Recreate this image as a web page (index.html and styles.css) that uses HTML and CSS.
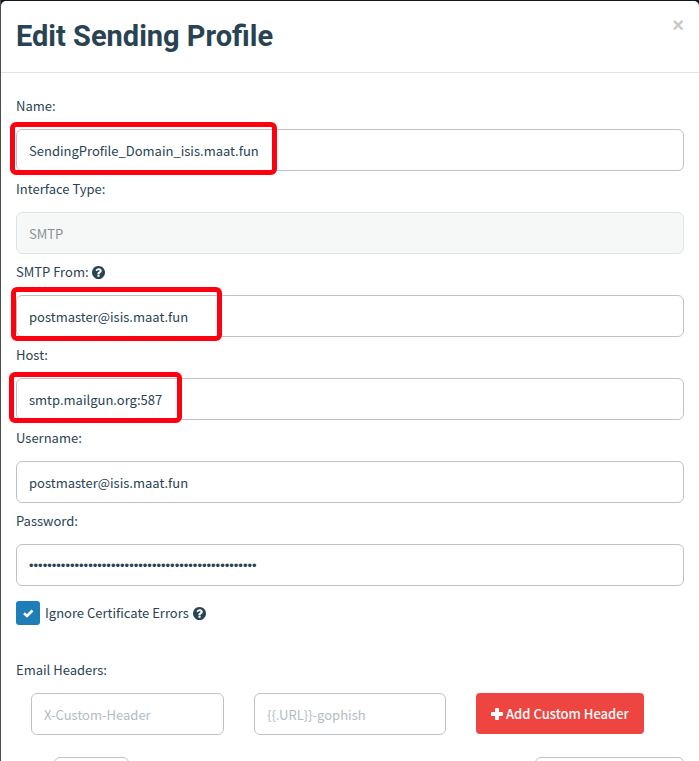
FILE: index.html
```html
<!DOCTYPE html>
<html lang="en">
<head>
<meta charset="utf-8">
<title>Edit Sending Profile</title>
<link rel="stylesheet" href="styles.css">
</head>
<body>
<svg width="0" height="0" class="sprite" aria-hidden="true">
  <symbol id="question" viewBox="0 0 1536 1536">
    <path d="M896 1248v-192q0-14-9-23t-23-9H672q-14 0-23 9t-9 23v192q0 14 9 23t23 9h192q14 0 23-9t9-23zm256-672q0-88-55.500-163T958 297t-170-41q-243 0-371 213-15 24 8 42l132 100q7 6 19 6 16 0 25-12 53-68 86-92 34-24 86-24 48 0 85.500 26t37.500 59q0 38-20 61t-68 45q-63 28-115.500 86.500T640 892v36q0 14 9 23t23 9h192q14 0 23-9t9-23q0-19 21.500-49.500T972 829q32-18 49-28.500t46-35 44.500-48 28-60.500 12.500-81zm384 192q0 209-103 385.500T1153.500 1433 768 1536t-385.500-103T103 1153.500 0 768t103-385.500T382.500 103 768 0t385.500 103T1433 382.500 1536 768z"/>
  </symbol>
</svg>
<main class="modal">
  <header class="modal-header">
    <h1>Edit Sending Profile</h1>
    <button type="button" class="close" aria-label="Close">×</button>
  </header>
  <form class="modal-body">
    <label for="name">Name:</label>
    <div class="control">
      <input id="name" type="text" value="SendingProfile_Domain_isis.maat.fun">
      <span class="mark mark-name"></span>
    </div>
    <label for="interface">Interface Type:</label>
    <div class="control"><input id="interface" type="text" value="SMTP" disabled></div>
    <label for="from">SMTP From: <svg class="help"><use href="#question"/></svg></label>
    <div class="control">
      <input id="from" type="text" value="postmaster@isis.maat.fun">
      <span class="mark mark-from"></span>
    </div>
    <label for="host">Host:</label>
    <div class="control">
      <input id="host" type="text" value="smtp.mailgun.org:587">
      <span class="mark mark-host"></span>
    </div>
    <label for="username">Username:</label>
    <div class="control"><input id="username" type="text" value="postmaster@isis.maat.fun"></div>
    <label for="password">Password:</label>
    <div class="control"><input id="password" type="password" value="01234567890123456789012345678901234567890123456789"></div>
    <div class="check">
      <input id="ignore" type="checkbox" checked>
      <label for="ignore">Ignore Certificate Errors <svg class="help"><use href="#question"/></svg></label>
    </div>
    <label for="header-key">Email Headers:</label>
    <div class="headers">
      <input id="header-key" type="text" placeholder="X-Custom-Header">
      <input type="text" placeholder="{{.URL}}-gophish" aria-label="Header value">
      <button type="button" class="add"><svg class="plus" viewBox="0 0 12 12"><path d="M5 0h2q1 0 1 1v3h3q1 0 1 1v2q0 1-1 1H8v3q0 1-1 1H5q-1 0-1-1V8H1q-1 0-1-1V5q0-1 1-1h3V1q0-1 1-1z"/></svg>Add Custom Header</button>
    </div>
    <div class="table-tools">
      <select aria-label="Entries shown"></select>
      <input type="search" aria-label="Search">
    </div>
  </form>
</main>
</body>
</html>
```
FILE: styles.css
```css
* { box-sizing: border-box; }
body {
  margin: 0;
  height: 100vh;
  overflow: hidden;
  padding: 1px 0 0 1px;
  background: linear-gradient(to right, #4b4c50 1px, #0f1723 1px);
  color: #294353;
  font: 13px/24px "Noto Sans CJK SC", "Noto Sans", sans-serif;
}
.sprite { position: absolute; }
.modal {
  min-height: 100vh;
  background: #fff;
  border-radius: 5px;
}
.modal-header {
  display: flex;
  justify-content: space-between;
  align-items: flex-start;
  padding: 15px;
  border-bottom: 1px solid #e3e3e3;
}
h1 {
  margin: 0;
  font: bold 29px/41px Roboto, sans-serif;
}
.close {
  padding: 0;
  border: 0;
  background: none;
  color: #c8c8c8;
  font: bold 20px/18px "Liberation Sans", sans-serif;
}
.modal-body { padding: 15px; }
.modal-body > label {
  display: block;
  padding: 6px 0 11px;
}
.control { position: relative; }
input, select {
  display: block;
  width: 100%;
  height: 42px;
  margin: 0;
  padding: 0 12px;
  border: 1px solid #bdc3c7;
  border-radius: 6px;
  background: #fff;
  color: inherit;
  font: inherit;
}
input[type="password"] { font-family: "Liberation Sans", sans-serif; }
input::placeholder { color: #b2bcc5; opacity: 1; }
input:disabled {
  background: #f6f8f8;
  border-color: #dfe3e5;
  color: #8d9192;
}
.mark {
  position: absolute;
  border: 5px solid #ff0010;
  border-radius: 6px;
  pointer-events: none;
}
.mark-name { left: -6px; top: -7px; width: 267px; height: 53px; }
.mark-from { left: -5px; top: -8px; width: 211px; height: 54px; }
.mark-host { left: -7px; top: -6px; width: 173px; height: 51px; }
.help {
  width: 13px;
  height: 13px;
  margin-left: 1px;
  fill: currentColor;
  vertical-align: -2px;
}
.check {
  display: flex;
  align-items: center;
  gap: 5px;
  margin: 15px 0 27px;
}
.check input {
  appearance: none;
  flex: none;
  width: 24px;
  height: 24px;
  padding: 0;
  border: 0;
  border-radius: 3px;
  background: #1f7db8 url("data:image/svg+xml,%3Csvg xmlns='http://www.w3.org/2000/svg' viewBox='0 0 24 24'%3E%3Cpath d='M8 12.300l3 2.700 5.500-5.500' fill='none' stroke='white' stroke-width='2.600'/%3E%3C/svg%3E");
}
.headers {
  display: grid;
  grid-template-columns: 193fr 192fr 208fr;
  gap: 30px;
  padding: 0 0 0 15px;
  align-items: start;
}
.add {
  justify-self: start;
  display: flex;
  align-items: center;
  gap: 3px;
  height: 41px;
  padding: 0 15px;
  border: 0;
  border-radius: 4px;
  background: #ee4540;
  color: #fff;
  font: inherit;
  font-weight: 500;
  white-space: nowrap;
}
.plus { width: 12px; height: 12px; fill: #fff; }
.table-tools {
  display: flex;
  justify-content: space-between;
  padding: 22px 0 0 38px;
}
.table-tools select { appearance: none; width: 75px; }
.table-tools input { width: 149px; }
```
